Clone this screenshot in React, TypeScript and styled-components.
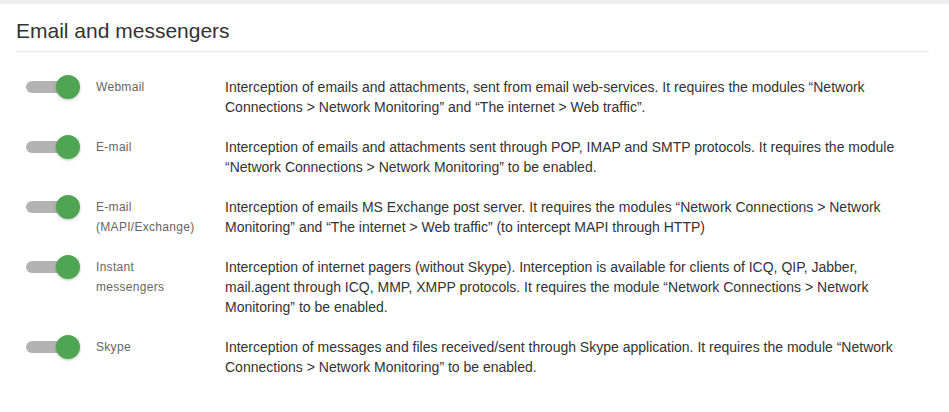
import React from 'react'
import styled, { createGlobalStyle } from 'styled-components'

const GlobalStyle = createGlobalStyle`
  html, body {
    margin: 0;
    padding: 0;
    background: #fff;
    font-family: 'Liberation Sans', Arial, sans-serif;
  }
`

type Module = {
  id: string
  label: string[]
  description: string
  enabled: boolean
}

const modules: Module[] = [
  {
    id: 'webmail',
    label: ['Webmail'],
    description:
      'Interception of emails and attachments, sent from email web-services. It requires the modules \u201cNetwork Connections > Network Monitoring\u201d and \u201cThe internet > Web traffic\u201d.',
    enabled: true,
  },
  {
    id: 'email',
    label: ['E-mail'],
    description:
      'Interception of emails and attachments sent through POP, IMAP and SMTP protocols. It requires the module \u201cNetwork Connections > Network Monitoring\u201d to be enabled.',
    enabled: true,
  },
  {
    id: 'mapi',
    label: ['E-mail', '(MAPI/Exchange)'],
    description:
      'Interception of emails MS Exchange post server. It requires the modules \u201cNetwork Connections > Network Monitoring\u201d and \u201cThe internet > Web traffic\u201d (to intercept MAPI through HTTP)',
    enabled: true,
  },
  {
    id: 'im',
    label: ['Instant', 'messengers'],
    description:
      'Interception of internet pagers (without Skype). Interception is available for clients of ICQ, QIP, Jabber, mail.agent through ICQ, MMP, XMPP protocols. It requires the module \u201cNetwork Connections > Network Monitoring\u201d to be enabled.',
    enabled: true,
  },
  {
    id: 'skype',
    label: ['Skype'],
    description:
      'Interception of messages and files received/sent through Skype application. It requires the module \u201cNetwork Connections > Network Monitoring\u201d to be enabled.',
    enabled: true,
  },
]

const TopBar = styled.div`
  height: 4px;
  background: #eeeeee;
`

const Section = styled.section`
  padding: 0 20px 0 16px;
`

const Title = styled.h2`
  margin: 16px 0 0;
  padding-bottom: 9px;
  border-bottom: 1px solid #e5e5e5;
  font-size: 21px;
  line-height: 22px;
  font-weight: normal;
  color: #333;
`

const List = styled.div`
  padding: 25px 0 0 10px;
`

const Row = styled.div`
  display: grid;
  grid-template-columns: 70px 129px 700px;
  margin-bottom: 20px;
`

const ToggleCell = styled.div`
  height: 20px;
  display: flex;
  align-items: center;
`

const Track = styled.button<{ $on: boolean }>`
  position: relative;
  width: 44px;
  height: 12px;
  padding: 0;
  border: none;
  border-radius: 6px;
  background: #b3b3b3;
  cursor: pointer;
`

const Knob = styled.span<{ $on: boolean }>`
  position: absolute;
  top: -6px;
  left: ${(p) => (p.$on ? '30px' : '-4px')};
  width: 24px;
  height: 24px;
  border-radius: 50%;
  background: ${(p) => (p.$on ? '#4fa553' : '#f1f1f1')};
  box-shadow: 0 1px 3px rgba(0, 0, 0, 0.25);
`

const Label = styled.div`
  font-size: 12px;
  line-height: 20px;
  letter-spacing: 0.3px;
  color: #666;
`

const Description = styled.div`
  font-size: 14px;
  line-height: 20px;
  color: #333;
`

const Toggle: React.FC<{ on: boolean }> = ({ on }) => (
  <Track $on={on} aria-pressed={on}>
    <Knob $on={on} />
  </Track>
)

export default function App() {
  return (
    <>
      <GlobalStyle />
      <TopBar />
      <Section>
        <Title>Email and messengers</Title>
        <List>
          {modules.map((m) => (
            <Row key={m.id}>
              <ToggleCell>
                <Toggle on={m.enabled} />
              </ToggleCell>
              <Label>
                {m.label.map((l) => (
                  <div key={l}>{l}</div>
                ))}
              </Label>
              <Description>{m.description}</Description>
            </Row>
          ))}
        </List>
      </Section>
    </>
  )
}
